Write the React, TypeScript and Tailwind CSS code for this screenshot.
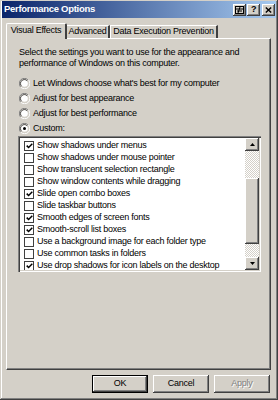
import React from 'react';

const items: { label: string; checked: boolean }[] = [
  { label: 'Show shadows under menus', checked: true },
  { label: 'Show shadows under mouse pointer', checked: false },
  { label: 'Show translucent selection rectangle', checked: false },
  { label: 'Show window contents while dragging', checked: false },
  { label: 'Slide open combo boxes', checked: true },
  { label: 'Slide taskbar buttons', checked: false },
  { label: 'Smooth edges of screen fonts', checked: true },
  { label: 'Smooth-scroll list boxes', checked: true },
  { label: 'Use a background image for each folder type', checked: false },
  { label: 'Use common tasks in folders', checked: false },
  { label: 'Use drop shadows for icon labels on the desktop', checked: true },
];

const radios = [
  { label: "Let Windows choose what's best for my computer", on: false },
  { label: 'Adjust for best appearance', on: false },
  { label: 'Adjust for best performance', on: false },
  { label: 'Custom:', on: true },
];

const raised =
  'bg-[#d4d0c8] shadow-[inset_-1px_-1px_0_#404040,inset_1px_1px_0_#ffffff,inset_-2px_-2px_0_#808080]';

function Radio({ on }: { on: boolean }) {
  return (
    <svg width="11" height="11" viewBox="0 0 11 11" className="shrink-0">
      <path d="M9.2 2 A5 5 0 0 0 1.6 9" fill="none" stroke="#808080" />
      <path d="M8.3 2.9 A3.8 3.8 0 0 0 2.5 8.2" fill="none" stroke="#404040" />
      <path d="M1.8 9.2 A5 5 0 0 0 9.4 1.8" fill="none" stroke="#ffffff" />
      <circle cx="5.5" cy="5.5" r="3.3" fill="#ffffff" />
      {on && <circle cx="5.5" cy="5.5" r="1.5" fill="#000000" />}
    </svg>
  );
}

function Check({ checked }: { checked: boolean }) {
  return (
    <div className="w-[10px] h-[10px] shrink-0 border border-[#404040] bg-white flex items-center justify-center">
      {checked && (
        <svg width="7" height="6" viewBox="0 0 7 6">
          <path d="M0.7 2.6 L2.6 4.5 L6.3 0.8" fill="none" stroke="#000" strokeWidth="1.5" />
        </svg>
      )}
    </div>
  );
}

function Arrow({ up }: { up: boolean }) {
  return (
    <div className={`w-[14px] h-[13px] flex items-center justify-center ${raised}`}>
      <svg width="5" height="3" viewBox="0 0 5 3">
        {up ? <path d="M2.5 0 L5 3 L0 3 Z" fill="#000" /> : <path d="M0 0 L5 0 L2.5 3 Z" fill="#000" />}
      </svg>
    </div>
  );
}

function TitleButton({ children }: { children: React.ReactNode }) {
  return (
    <div className={`w-[13px] h-[12px] flex items-center justify-center text-[9px] font-bold leading-none text-black ${raised}`}>
      {children}
    </div>
  );
}

export default function App() {
  return (
    <div
      className="w-[278px] h-[400px] bg-[#d4d0c8] p-[2px] flex flex-col text-[9px] tracking-[-0.25px] text-black shadow-[inset_-1px_-1px_0_#404040,inset_1px_1px_0_#d4d0c8,inset_-2px_-2px_0_#808080,inset_2px_2px_0_#ffffff] overflow-hidden"
      style={{ fontFamily: '"Liberation Sans", Arial, sans-serif' }}
    >
      {/* Title bar */}
      <div className="h-[17px] mt-[-1px] flex items-center justify-between pl-[2px] pr-[1px] bg-[linear-gradient(to_right,#0a246a,#a6caf0)]">
        <span className="text-white font-bold text-[9.5px] tracking-[-0.3px]">Performance Options</span>
        <div className="flex items-center gap-[1px]">
          <TitleButton>
            <svg width="9" height="8" viewBox="0 0 9 8">
              <rect x="0.5" y="0.5" width="8" height="7" fill="none" stroke="#000" />
              <path d="M1 3 H8 M2 5 H7 M5 1 L3 7" stroke="#000" fill="none" />
            </svg>
          </TitleButton>
          <TitleButton>?</TitleButton>
          <div className="ml-[1px]">
            <TitleButton>
              <svg width="7" height="6" viewBox="0 0 7 6">
                <path d="M0.8 0.5 L6.2 5.5 M6.2 0.5 L0.8 5.5" stroke="#000" strokeWidth="1.4" />
              </svg>
            </TitleButton>
          </div>
        </div>
      </div>

      {/* Tabs */}
      <div className="mt-[4px] ml-[4px] h-[16px] flex items-end relative z-10 whitespace-nowrap">
        <div className="w-[61px] h-[16px] flex items-center justify-center bg-[#d4d0c8] border-l border-t border-white border-r-2 border-r-[#404040] rounded-t-[2px] mb-[-1px] pb-[1px]">
          Visual Effects
        </div>
        <div className="w-[43px] h-[13px] flex items-center justify-center border-t border-white border-r-2 border-r-[#404040]">
          Advanced
        </div>
        <div className="w-[108px] h-[13px] flex items-center justify-center border-t border-l border-white border-r-2 border-r-[#404040]">
          Data Execution Prevention
        </div>
      </div>

      {/* Panel */}
      <div className="ml-[4px] mr-[5px] h-[332px] border-l border-t border-white border-r border-b border-r-[#404040] border-b-[#404040] shadow-[inset_-1px_-1px_0_#808080] pt-[8px] pl-[11px] pr-[8px]">
        <div className="leading-[11px] pl-[1px]">
          Select the settings you want to use for the appearance and performance of Windows on this computer.
        </div>
        <div className="mt-[7px] flex flex-col">
          {radios.map((r) => (
            <div key={r.label} className="h-[15px] flex items-center gap-[3px] pl-[1px]">
              <Radio on={r.on} />
              <span>{r.label}</span>
            </div>
          ))}
        </div>
        <div className="h-[136px] flex shadow-[inset_1px_1px_0_#808080,inset_2px_2px_0_#404040,inset_-1px_-1px_0_#ffffff,inset_-2px_-2px_0_#d4d0c8] bg-white p-[2px] mr-[1px]">
          <div className="flex-1 overflow-hidden pt-[2px] pl-[4px]">
            {items.map((it) => (
              <div key={it.label} className="h-[12px] flex items-center gap-[3px] whitespace-nowrap">
                <Check checked={it.checked} />
                <span>{it.label}</span>
              </div>
            ))}
          </div>
          <div className="w-[14px] flex flex-col bg-[repeating-conic-gradient(#d4d0c8_0_25%,#ffffff_0_50%)] bg-[length:2px_2px]">
            <Arrow up />
            <div className="h-[27px]" />
            <div className={`h-[66px] ${raised}`} />
            <div className="flex-1" />
            <Arrow up={false} />
          </div>
        </div>
      </div>

      {/* Buttons */}
      <div className="mt-[5px] flex justify-end gap-[5px] pr-[6px]">
        <div className="w-[56px] h-[18px] flex items-center justify-center border border-black bg-[#d4d0c8] shadow-[inset_-1px_-1px_0_#404040,inset_1px_1px_0_#ffffff,inset_-2px_-2px_0_#808080]">
          OK
        </div>
        <div className={`w-[56px] h-[18px] flex items-center justify-center ${raised}`}>Cancel</div>
        <div className={`w-[56px] h-[18px] flex items-center justify-center text-[#808080] [text-shadow:1px_1px_0_#ffffff] ${raised}`}>
          Apply
        </div>
      </div>
    </div>
  );
}
